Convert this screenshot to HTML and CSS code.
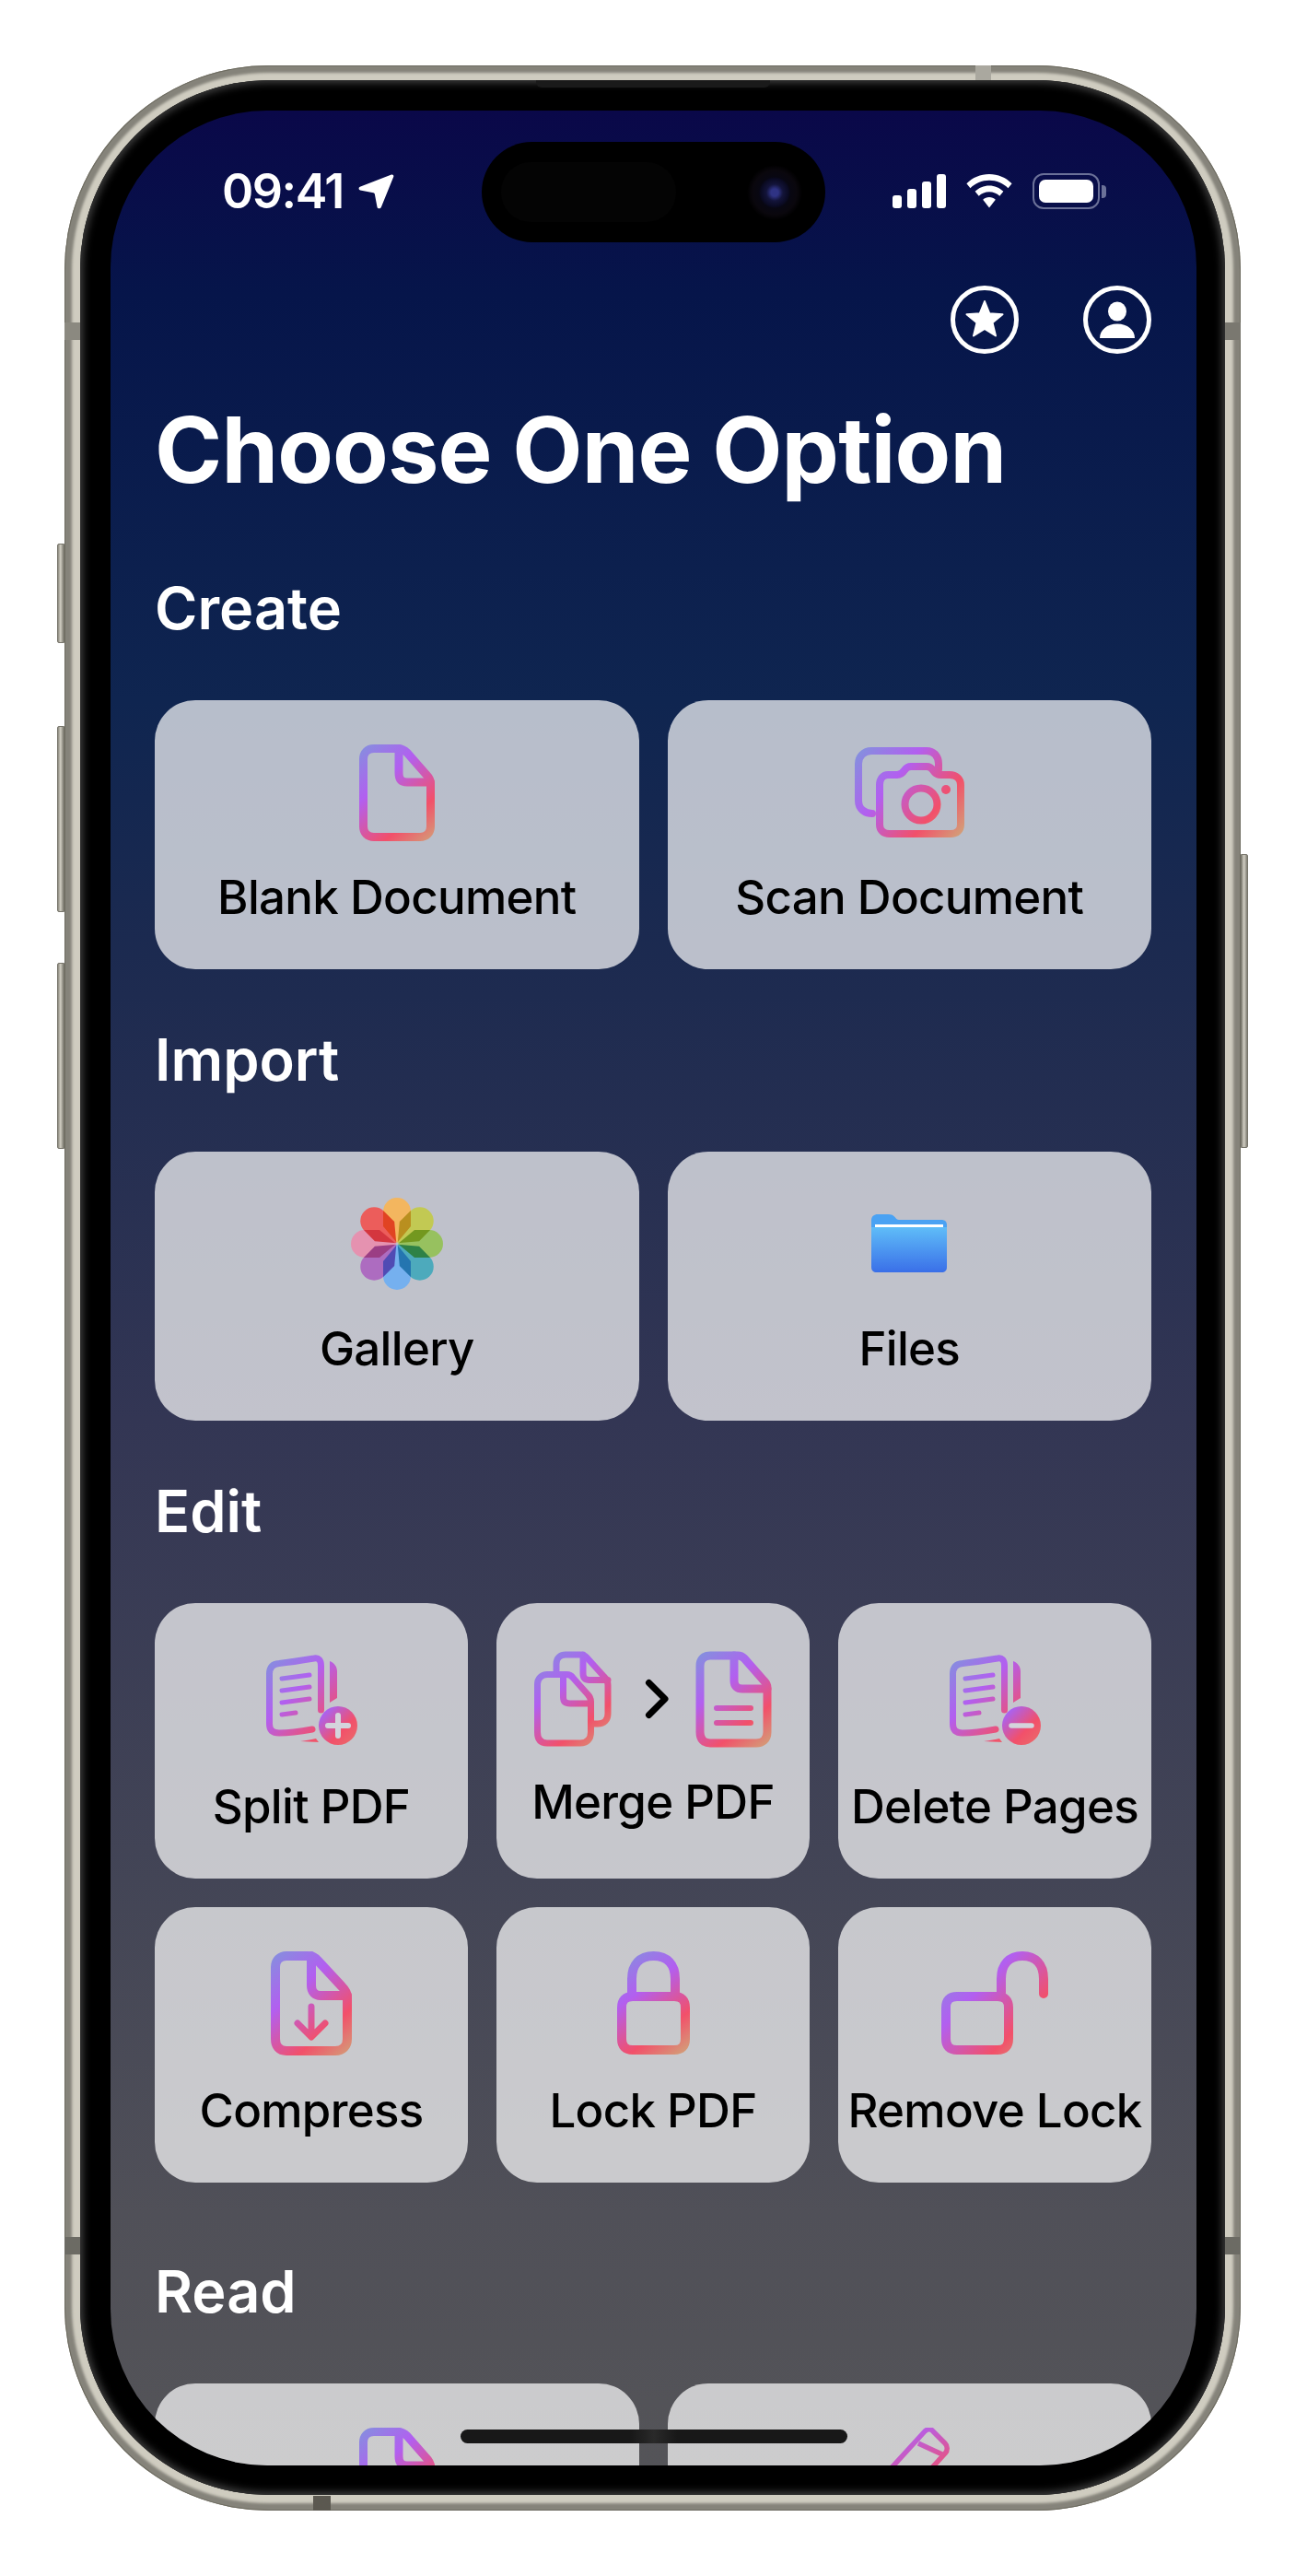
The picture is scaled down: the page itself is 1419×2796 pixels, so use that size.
FILE: index.html
```html
<!DOCTYPE html>
<html lang="en">
<head>
<meta charset="utf-8">
<title>Choose One Option</title>
<link rel="stylesheet" href="styles.css">
</head>
<body>
<svg class="defs" aria-hidden="true">
  <defs>
    <linearGradient id="stops">
      <stop offset="0" stop-color="#7f95dc"/>
      <stop offset=".36" stop-color="#b25ff0"/>
      <stop offset=".72" stop-color="#f2506a"/>
      <stop offset="1" stop-color="#cfa87a"/>
    </linearGradient>
    <linearGradient id="badge" x1="0" y1="0" x2="1" y2="1">
      <stop offset=".15" stop-color="#a962f2"/>
      <stop offset=".62" stop-color="#f2506a"/>
      <stop offset="1" stop-color="#e8706a"/>
    </linearGradient>
    <path id="petal" d="M0 -1L-15 -19V-35A15 15 0 0 1 15 -35V-19Z"/>
  </defs>
</svg>
<div class="stage">
  <div class="phone">
    <span class="btn btn-mute"></span>
    <span class="btn btn-up"></span>
    <span class="btn btn-down"></span>
    <span class="btn btn-power"></span>
    <span class="band band-top"></span>
    <span class="band band-left"></span>
    <span class="band band-right"></span>
    <span class="band band-left-low"></span>
    <span class="band band-right-low"></span>
    <span class="band band-bottom"></span>
    <div class="bezel">
      <span class="speaker"></span>
      <main class="screen">
        <div class="island"><span class="island-pill"></span><span class="camera"></span></div>
        <header class="status">
          <div class="status-left">
            <span class="time">09:41</span>
            <svg class="arrow" width="39" height="39" viewBox="0 0 39 39"><path d="M36 1.500C37.500 1 38.800 2.300 38.300 3.800L24.800 37C24 38.900 21 38.800 20.500 36.800L17.800 22.500C17.600 21.800 17.200 21.400 16.400 21.300L2 18.500C.2 18 0 15.600 1.800 14.800Z" fill="#fff"/></svg>
          </div>
          <div class="status-right">
            <svg width="58" height="37" viewBox="0 0 58 37" fill="#fff"><rect x="0" y="23" width="10" height="14" rx="3"/><rect x="16" y="16" width="10" height="21" rx="3"/><rect x="32" y="8" width="10" height="29" rx="3"/><rect x="48" y="0" width="10" height="37" rx="3"/></svg>
            <svg width="50" height="37" viewBox="0 0 50 37" fill="#fff"><path d="M25 0C34.500 0 43 3.700 49.600 10.200L45.500 15.200C40.200 10 33 6.800 25 6.800S9.800 10 4.500 15.200L.4 10.200C7 3.700 15.500 0 25 0Z"/><path d="M25 12.500C30.900 12.500 36.300 14.900 40.400 18.800L36.300 23.700C33.300 20.900 29.300 19.200 25 19.200S16.700 20.900 13.700 23.700L9.600 18.800C13.700 14.900 19.100 12.500 25 12.500Z"/><path d="M25 25C27.600 25 30 26 31.800 27.700L25 36.500L18.200 27.700C20 26 22.400 25 25 25Z"/></svg>
            <div class="battery"><span class="battery-case"><span class="battery-fill"></span></span><span class="battery-nub"></span></div>
          </div>
        </header>
        <nav class="actions">
          <svg class="round" width="74" height="74" viewBox="0 0 74 74"><circle cx="37" cy="37" r="34.500" fill="none" stroke="#fff" stroke-width="5"/><path d="M37 17L42.300 30.300L56.500 31.200L45.500 40.300L49 54.500L37 46.800L25 54.500L28.500 40.300L17.500 31.200L31.700 30.300Z" fill="#fff" stroke="#fff" stroke-width="2" stroke-linejoin="round"/></svg>
          <svg class="round" width="74" height="74" viewBox="0 0 74 74"><circle cx="37" cy="37" r="34.500" fill="none" stroke="#fff" stroke-width="5"/><ellipse cx="37" cy="28" rx="10" ry="10.500" fill="#fff"/><path d="M18 57C18 48 26 41.500 37 41.500S56 48 56 57Z" fill="#fff"/></svg>
        </nav>
        <h1 class="title">Choose One Option</h1>

        <h2 class="section">Create</h2>
        <div class="grid two">
          <div class="card">
            <svg class="icon" width="82" height="105" viewBox="0 0 82 105"><linearGradient id="g1" href="#stops" gradientUnits="userSpaceOnUse" x1="-5" y1="0" x2="87" y2="105"/><g fill="none" stroke="url(#g1)" stroke-width="9" stroke-linejoin="round" stroke-linecap="round"><path d="M16 4.500H42C46 4.500 49 6 52 9L73 33C76 36 77.500 39 77.500 43V89C77.500 96 73 100.500 66 100.500H16C9 100.500 4.500 96 4.500 89V16C4.500 9 9 4.500 16 4.500Z"/><path d="M43 4.500V31C43 38 46 41 52 41H77.500"/></g></svg>
            <span class="label">Blank Document</span>
          </div>
          <div class="card">
            <svg class="icon scan" width="119" height="98" viewBox="0 0 119 98"><linearGradient id="g2" href="#stops" gradientUnits="userSpaceOnUse" x1="0" y1="0" x2="119" y2="98"/><g fill="none" stroke="url(#g2)" stroke-width="8" stroke-linecap="round" stroke-linejoin="round"><path d="M19 72C11 72 4 67 4 58V18C4 10 10 4 18 4H78C86 4 91 10 91 18V24"/><path d="M36 30H46C50 30 52 28 54 25C56 22 58 21 61 21H78C81 21 83 22 85 25C87 28 89 30 93 30H103C110 30 115 34 115 41V84C115 90 111 94 104 94H38C31 94 27 90 27 84V41C27 34 31 30 36 30Z"/><circle cx="72" cy="62" r="17.500"/></g><circle cx="99" cy="46" r="5" fill="url(#g2)"/></svg>
            <span class="label">Scan Document</span>
          </div>
        </div>

        <h2 class="section">Import</h2>
        <div class="grid two">
          <div class="card">
            <svg class="icon flower" width="100" height="100" viewBox="-50 -50 100 100">
              <use href="#petal" fill="#f3b65f"/>
              <use href="#petal" fill="#c2c953" transform="rotate(45)"/>
              <use href="#petal" fill="#97c15f" transform="rotate(90)"/>
              <use href="#petal" fill="#4daabc" transform="rotate(135)"/>
              <use href="#petal" fill="#75b0ef" transform="rotate(180)"/>
              <use href="#petal" fill="#ad6cc0" transform="rotate(225)"/>
              <use href="#petal" fill="#e592b0" transform="rotate(270)"/>
              <use href="#petal" fill="#ec5d5b" transform="rotate(315)"/>
            </svg>
            <span class="label">Gallery</span>
          </div>
          <div class="card">
            <svg class="icon folder" width="82" height="63" viewBox="0 0 82 63"><linearGradient id="fb" x1="0" y1="0" x2="0" y2="1"><stop offset="0" stop-color="#5fbdf8"/><stop offset="1" stop-color="#3a6fe8"/></linearGradient><path d="M0 7C0 2 3 0 7 0H18C22 0 24 1 26 3.500C27 5 28 6 30 6H76C80 6 82 8 82 12V20H0Z" fill="#4aa2f3"/><path d="M4 11H78V14H4Z" fill="#fff"/><path d="M0 14H82V57C82 61 80 63 76 63H6C2 63 0 61 0 57Z" fill="url(#fb)"/></svg>
            <span class="label">Files</span>
          </div>
        </div>

        <h2 class="section">Edit</h2>
        <div class="grid three">
          <div class="card tall sheet">
            <svg class="icon" width="99" height="99" viewBox="0 0 99 99"><linearGradient id="g3" href="#stops" gradientUnits="userSpaceOnUse" x1="0" y1="0" x2="99" y2="99"/><g fill="none" stroke="url(#g3)" stroke-linecap="round" stroke-linejoin="round"><path stroke-width="7" d="M59.500 60V12C59.500 6 57 3 52 4C40 6 28 8 14 9.500C7 10 3.500 14 3.500 21V75C3.500 82 7 85 14 85C27 85 39 83 50 81"/><path stroke-width="5" d="M17 26L47 22M17 39L47 35M17 52L47 48M17 65L32 63"/></g><path d="M69 7C74 9 77 13 77 18V47L69 52Z M37 94C44 93 50 92 54 91L57 95Z" fill="url(#g3)"/><circle cx="78" cy="77" r="21" fill="url(#badge)"/><path d="M67 77H89M78 66V88" stroke="#d4d4dc" stroke-width="6" stroke-linecap="round"/></svg>
            <span class="label">Split PDF</span>
          </div>
          <div class="card tall merge">
            <div class="merge-icons">
              <svg width="84" height="104" viewBox="0 0 84 104"><linearGradient id="g4" href="#stops" gradientUnits="userSpaceOnUse" x1="0" y1="0" x2="84" y2="104"/><g fill="none" stroke="url(#g4)" stroke-width="7" stroke-linecap="round" stroke-linejoin="round"><path d="M24 21V14C24 7 29 4 34 4H50C53 4 55 5 57 7L76 28C79 31 80 33 80 37V68C80 75 76 79 69 79H62"/><path d="M53 4V24C53 29 55 31.500 60 31.500H80"/><path d="M14 25.500H35C38 25.500 40 26 42 29L58 47C60 49 61.500 52 61.500 55V88C61.500 96 57 100 50 100H14C7 100 3.500 96 3.500 88V36C3.500 30 8 25.500 14 25.500Z"/><path d="M31.500 26V50C31.500 55 34 57 39 57H61"/></g></svg>
              <svg class="chev" width="26" height="44" viewBox="0 0 26 44"><path d="M4.500 4.500L22 22L4.500 39.500" fill="none" stroke="#000" stroke-width="7" stroke-linecap="round" stroke-linejoin="round"/></svg>
              <svg width="83" height="105" viewBox="0 0 83 105"><linearGradient id="g5" href="#stops" gradientUnits="userSpaceOnUse" x1="0" y1="0" x2="83" y2="105"/><g fill="none" stroke="url(#g5)" stroke-width="9" stroke-linecap="round" stroke-linejoin="round"><path d="M16 5H46C49 5 51 6 53 8L75 33C77 35 78 37 78 40V88C78 96 73 100 66 100H16C9 100 5 96 5 88V16C5 9 9 5 16 5Z"/><path d="M42 5V32C42 38 45 41 51 41H78"/><path stroke-width="6" d="M23 62H60M23 78H60"/></g></svg>
            </div>
            <span class="label">Merge PDF</span>
          </div>
          <div class="card tall sheet">
            <svg class="icon" width="99" height="99" viewBox="0 0 99 99"><linearGradient id="g6" href="#stops" gradientUnits="userSpaceOnUse" x1="0" y1="0" x2="99" y2="99"/><g fill="none" stroke="url(#g6)" stroke-linecap="round" stroke-linejoin="round"><path stroke-width="7" d="M59.500 60V12C59.500 6 57 3 52 4C40 6 28 8 14 9.500C7 10 3.500 14 3.500 21V75C3.500 82 7 85 14 85C27 85 39 83 50 81"/><path stroke-width="5" d="M17 26L47 22M17 39L47 35M17 52L47 48M17 65L32 63"/></g><path d="M69 7C74 9 77 13 77 18V47L69 52Z M37 94C44 93 50 92 54 91L57 95Z" fill="url(#g6)"/><circle cx="78" cy="77" r="21" fill="url(#badge)"/><path d="M67 77H89" stroke="#d4d4dc" stroke-width="5.500" stroke-linecap="round"/></svg>
            <span class="label">Delete Pages</span>
          </div>
          <div class="card tall">
            <svg class="icon" width="88" height="113" viewBox="0 0 88 113"><linearGradient id="g7" href="#stops" gradientUnits="userSpaceOnUse" x1="-5" y1="0" x2="93" y2="113"/><g fill="none" stroke="url(#g7)" stroke-linecap="round" stroke-linejoin="round"><path stroke-width="10" d="M17 5H40C45 5 48 6 51 10L77 38C81 42 83 45 83 50V95C83 103 78 108 70 108H17C9 108 5 103 5 95V17C5 10 10 5 17 5Z"/><path stroke-width="10" d="M44 5V37C44 44 48 48 54 48H83"/><path stroke-width="7" d="M44 60V92M29 78L44 93L59 78"/></g></svg>
            <span class="label">Compress</span>
          </div>
          <div class="card tall">
            <svg class="icon" width="79" height="112" viewBox="0 0 79 112"><linearGradient id="g8" href="#stops" gradientUnits="userSpaceOnUse" x1="0" y1="0" x2="79" y2="112"/><g fill="none" stroke="url(#g8)" stroke-width="10" stroke-linejoin="round"><path d="M16 47V30C16 14 25 5 39.500 5S63 14 63 30V47"/><path d="M17 49H62C70 49 74 53 74 61V95C74 103 70 107 62 107H17C9 107 5 103 5 95V61C5 53 9 49 17 49Z"/></g></svg>
            <span class="label">Lock PDF</span>
          </div>
          <div class="card tall">
            <svg class="icon" width="116" height="112" viewBox="0 0 116 112"><linearGradient id="g9" href="#stops" gradientUnits="userSpaceOnUse" x1="0" y1="0" x2="116" y2="112"/><g fill="none" stroke="url(#g9)" stroke-width="10" stroke-linejoin="round" stroke-linecap="round"><path d="M17 49H61C69 49 73 53 73 61V95C73 103 69 107 61 107H17C9 107 5 103 5 95V61C5 53 9 49 17 49Z"/><path d="M65 45V30C65 14 74 5 88 5S111 14 111 30V46"/></g></svg>
            <span class="label">Remove Lock</span>
          </div>
        </div>

        <h2 class="section section-read">Read</h2>
        <div class="grid two">
          <div class="card">
            <svg class="icon" width="82" height="105" viewBox="0 0 82 105"><linearGradient id="g10" href="#stops" gradientUnits="userSpaceOnUse" x1="-5" y1="0" x2="87" y2="105"/><g fill="none" stroke="url(#g10)" stroke-width="9" stroke-linejoin="round" stroke-linecap="round"><path d="M16 4.500H42C46 4.500 49 6 52 9L73 33C76 36 77.500 39 77.500 43V89C77.500 96 73 100.500 66 100.500H16C9 100.500 4.500 96 4.500 89V16C4.500 9 9 4.500 16 4.500Z"/><path d="M43 4.500V31C43 38 46 41 52 41H77.500"/></g></svg>
          </div>
          <div class="card">
            <svg class="icon" width="90" height="105" viewBox="0 0 90 105"><linearGradient id="g11" href="#stops" gradientUnits="userSpaceOnUse" x1="0" y1="-40" x2="90" y2="105"/><g fill="none" stroke="url(#g11)" stroke-width="5.500" stroke-linejoin="round"><path d="M20 50L62 4C65 1 69 1 71 4L84 17C87 20 87 25 84 28L42 74L18 88Z"/><path d="M55 17L83 30"/></g></svg>
          </div>
        </div>
        <span class="home"></span>
      </main>
    </div>
  </div>
</div>
</body>
</html>
```

FILE: styles.css
```css
* { box-sizing: border-box; }
html, body { margin: 0; background: #fff; }
body { width: 1419px; height: 2796px; overflow: hidden; font-family: Inter, "Liberation Sans", sans-serif; }
.defs { position: absolute; width: 0; height: 0; }
.stage { padding: 71px 72px 71px 70px; }

.phone {
  position: relative;
  width: 1277px;
  height: 2654px;
  padding: 16px 17px 17px 17px;
  border-radius: 222px;
  background: #cfccc0;
  box-shadow: inset 0 0 0 1px #6d6b60, inset 0 0 3px 8px #85837a;
}
.btn { position: absolute; width: 8px; background: linear-gradient(90deg, #8b897e, #d0cdc2 45%, #7e7c72); border: 1px solid #77756b; border-radius: 2px 0 0 2px; }
.btn-mute { left: -8px; top: 519px; height: 108px; }
.btn-up { left: -8px; top: 717px; height: 202px; }
.btn-down { left: -8px; top: 974px; height: 202px; }
.btn-power { right: -8px; top: 856px; height: 319px; border-radius: 0 2px 2px 0; }
.band { position: absolute; background: #8b8980; }
.band-top { left: 989px; top: 0; width: 17px; height: 16px; background: #aaa89f; }
.band-left { left: 0; top: 279px; width: 17px; height: 19px; }
.band-right { right: 0; top: 279px; width: 17px; height: 19px; background: #7a7870; }
.band-left-low { left: 0; top: 2357px; width: 17px; height: 19px; background: #6c6b64; }
.band-right-low { right: 0; top: 2357px; width: 17px; height: 19px; background: #6c6b64; }
.band-bottom { left: 270px; bottom: 0; width: 19px; height: 16px; background: #5b5850; }

.bezel {
  position: relative;
  height: 100%;
  padding: 33px 31px 32px 33px;
  background: #000;
  border-radius: 205px;
  box-shadow: inset 0 0 0 1px #2c2c2c, inset 0 0 9px 3px #404040;
}
.speaker { position: absolute; left: 495px; top: 0; width: 254px; height: 8px; background: #1a1a1a; border-radius: 0 0 6px 6px; }

.screen {
  position: relative;
  height: 100%;
  padding: 0 49px 0 48px;
  overflow: hidden;
  border-radius: 170px;
  background: linear-gradient(180deg, #0a0849 0, #06154a 200px, #0f2550 640px, #1e2b50 960px, #333654 1420px, #434556 1920px, #505058 2280px, #545458 100%);
}
.island { position: absolute; left: 403px; top: 34px; width: 373px; height: 109px; background: #000; border-radius: 55px; }
.island-pill { position: absolute; left: 21px; top: 22px; width: 190px; height: 65px; background: #040404; border-radius: 32px; }
.camera { position: absolute; left: 288px; top: 25px; width: 60px; height: 60px; border-radius: 50%; background: radial-gradient(circle, #2f3384 0 4px, #13143a 9px, #0a0a22 15px, #080712 17px, #0a070d 24px, #000 30px); }

.status { display: flex; justify-content: space-between; align-items: center; height: 39px; margin-top: 68px; padding: 0 49px 0 73px; color: #fff; }
.status-left { display: flex; align-items: center; gap: 16px; }
.time { font-size: 52px; font-weight: 600; line-height: 39px; letter-spacing: -1.5px; }
.arrow { display: block; }
.status-right { display: flex; align-items: center; gap: 22px; }
.battery { display: flex; align-items: center; gap: 2px; }
.battery-case { display: block; width: 73px; height: 39px; padding: 5px; border: 2.5px solid #6b7198; border-radius: 12px; }
.battery-fill { display: block; width: 100%; height: 100%; background: #fff; border-radius: 7px; }
.battery-nub { display: block; width: 5px; height: 14px; background: #6b7198; border-radius: 0 4px 4px 0; }

.actions { display: flex; justify-content: flex-end; gap: 70px; margin-top: 83px; }
.round { display: block; }

.title { margin: 46px 0 78px; font-size: 99px; font-weight: 700; line-height: 116px; color: #fff; letter-spacing: -.85px; white-space: nowrap; }
.section { margin: 62px 0 0; font-size: 63px; font-weight: 600; line-height: 72px; color: #fff; }
.section-read { margin-top: 82.5px; }

.grid { display: grid; gap: 31px; margin-top: 63.5px; }
.two { grid-template-columns: repeat(2, 1fr); }
.three { grid-template-columns: repeat(3, 1fr); }
.card { display: flex; flex-direction: column; align-items: center; height: 292.5px; padding-top: 48px; border-radius: 44px; background: rgba(255, 255, 255, .7); overflow: hidden; }
.card.tall { height: 299px; }
.card.sheet { padding-top: 56px; }
.card.merge { padding-top: 52px; }
.icon { display: block; flex: none; }
.scan { margin-top: 3px; }
.label { margin-top: auto; margin-bottom: 48px; font-size: 51px; font-weight: 500; line-height: 60px; color: #000; white-space: nowrap; letter-spacing: -.7px; }
.merge .label { margin-bottom: 53px; }
.flower { isolation: isolate; margin-top: 2px; }
.flower use { mix-blend-mode: multiply; }
.folder { margin-top: 20px; }
.merge-icons { display: flex; align-items: center; }
.chev { margin: 0 29px 0 36px; }
.home { position: absolute; left: 380px; bottom: 24px; width: 420px; height: 15px; border-radius: 8px; background: linear-gradient(90deg, #181818 44%, #2a2a2a 50%, #181818 56%); }
```
